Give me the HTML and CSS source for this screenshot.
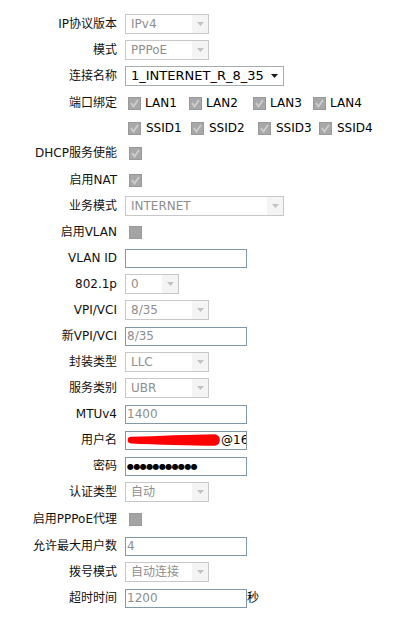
FILE: index.html
```html
<!DOCTYPE html>
<html lang="zh-CN">
<head>
<meta charset="utf-8">
<title>WAN</title>
<link rel="stylesheet" href="styles.css">
</head>
<body>
<div class="form">
  <div class="row"><div class="lbl">IP协议版本</div>
    <div class="sel dis w84"><span class="val">IPv4</span><span class="btn"><svg width="7" height="4" viewBox="0 0 7 4"><path d="M0 0H7L3.5 4Z"/></svg></span></div></div>
  <div class="row"><div class="lbl">模式</div>
    <div class="sel dis w84"><span class="val">PPPoE</span><span class="btn"><svg width="7" height="4" viewBox="0 0 7 4"><path d="M0 0H7L3.5 4Z"/></svg></span></div></div>
  <div class="row"><div class="lbl">连接名称</div>
    <div class="sel en w159"><span class="val">1_INTERNET_R_8_35</span><span class="btn"><svg width="7" height="4" viewBox="0 0 7 4"><path d="M0 0H7L3.5 4Z"/></svg></span></div></div>
  <div class="row h28"><div class="lbl">端口绑定</div>
    <div class="cbs lan">
      <span class="item"><svg class="cb" viewBox="0 0 13 13"><rect x="0.5" y="0.5" width="12" height="12"/><path d="M3 6 L5.5 9.5 L10 3"/></svg>LAN1</span>
      <span class="item"><svg class="cb" viewBox="0 0 13 13"><rect x="0.5" y="0.5" width="12" height="12"/><path d="M3 6 L5.5 9.5 L10 3"/></svg>LAN2</span>
      <span class="item"><svg class="cb" viewBox="0 0 13 13"><rect x="0.5" y="0.5" width="12" height="12"/><path d="M3 6 L5.5 9.5 L10 3"/></svg>LAN3</span>
      <span class="item"><svg class="cb" viewBox="0 0 13 13"><rect x="0.5" y="0.5" width="12" height="12"/><path d="M3 6 L5.5 9.5 L10 3"/></svg>LAN4</span>
    </div></div>
  <div class="row h22"><div class="lbl"></div>
    <div class="cbs ssid">
      <span class="item"><svg class="cb" viewBox="0 0 13 13"><rect x="0.5" y="0.5" width="12" height="12"/><path d="M3 6 L5.5 9.5 L10 3"/></svg>SSID1</span>
      <span class="item"><svg class="cb" viewBox="0 0 13 13"><rect x="0.5" y="0.5" width="12" height="12"/><path d="M3 6 L5.5 9.5 L10 3"/></svg>SSID2</span>
      <span class="item"><svg class="cb" viewBox="0 0 13 13"><rect x="0.5" y="0.5" width="12" height="12"/><path d="M3 6 L5.5 9.5 L10 3"/></svg>SSID3</span>
      <span class="item"><svg class="cb" viewBox="0 0 13 13"><rect x="0.5" y="0.5" width="12" height="12"/><path d="M3 6 L5.5 9.5 L10 3"/></svg>SSID4</span>
    </div></div>
  <div class="row h28"><div class="lbl">DHCP服务使能</div>
    <div class="one"><svg class="cb" viewBox="0 0 13 13"><rect x="0.5" y="0.5" width="12" height="12"/><path d="M3 6 L5.5 9.5 L10 3"/></svg></div></div>
  <div class="row"><div class="lbl">启用NAT</div>
    <div class="one"><svg class="cb" viewBox="0 0 13 13"><rect x="0.5" y="0.5" width="12" height="12"/><path d="M3 6 L5.5 9.5 L10 3"/></svg></div></div>
  <div class="row"><div class="lbl">业务模式</div>
    <div class="sel dis w159"><span class="val">INTERNET</span><span class="btn"><svg width="7" height="4" viewBox="0 0 7 4"><path d="M0 0H7L3.5 4Z"/></svg></span></div></div>
  <div class="row"><div class="lbl">启用VLAN</div>
    <div class="one"><svg class="cb off" viewBox="0 0 13 13"><rect x="0.5" y="0.5" width="12" height="12"/></svg></div></div>
  <div class="row"><div class="lbl">VLAN ID</div>
    <div class="inp"></div></div>
  <div class="row"><div class="lbl">802.1p</div>
    <div class="sel dis w54"><span class="val">0</span><span class="btn"><svg width="7" height="4" viewBox="0 0 7 4"><path d="M0 0H7L3.5 4Z"/></svg></span></div></div>
  <div class="row"><div class="lbl">VPI/VCI</div>
    <div class="sel dis w84"><span class="val">8/35</span><span class="btn"><svg width="7" height="4" viewBox="0 0 7 4"><path d="M0 0H7L3.5 4Z"/></svg></span></div></div>
  <div class="row"><div class="lbl">新VPI/VCI</div>
    <div class="inp">8/35</div></div>
  <div class="row"><div class="lbl">封装类型</div>
    <div class="sel dis w84"><span class="val">LLC</span><span class="btn"><svg width="7" height="4" viewBox="0 0 7 4"><path d="M0 0H7L3.5 4Z"/></svg></span></div></div>
  <div class="row"><div class="lbl">服务类别</div>
    <div class="sel dis w84"><span class="val">UBR</span><span class="btn"><svg width="7" height="4" viewBox="0 0 7 4"><path d="M0 0H7L3.5 4Z"/></svg></span></div></div>
  <div class="row"><div class="lbl">MTUv4</div>
    <div class="inp">1400</div></div>
  <div class="row"><div class="lbl">用户名</div>
    <div class="inp user"><svg class="redact" width="94" height="12" viewBox="0 0 94 12"><path d="M4 2.8 C30 2 64 0.4 88 0.2 A5.9 5.9 0 0 1 88 11.8 C64 11.6 30 10.4 4 9.4 A3.3 3.3 0 0 1 4 2.8Z"/></svg><span class="at">@16</span></div></div>
  <div class="row"><div class="lbl">密码</div>
    <div class="inp pass">●●●●●●●●●●●</div></div>
  <div class="row"><div class="lbl">认证类型</div>
    <div class="sel dis w84"><span class="val">自动</span><span class="btn"><svg width="7" height="4" viewBox="0 0 7 4"><path d="M0 0H7L3.5 4Z"/></svg></span></div></div>
  <div class="row h28"><div class="lbl">启用PPPoE代理</div>
    <div class="one"><svg class="cb off" viewBox="0 0 13 13"><rect x="0.5" y="0.5" width="12" height="12"/></svg></div></div>
  <div class="row"><div class="lbl">允许最大用户数</div>
    <div class="inp">4</div></div>
  <div class="row"><div class="lbl">拨号模式</div>
    <div class="sel dis w84"><span class="val">自动连接</span><span class="btn"><svg width="7" height="4" viewBox="0 0 7 4"><path d="M0 0H7L3.5 4Z"/></svg></span></div></div>
  <div class="row"><div class="lbl">超时时间</div>
    <div class="ctl"><div class="inp">1200</div><span class="unit">秒</span></div></div>
</div>
</body>
</html>
```
FILE: styles.css
```css
html, body {
  margin: 0;
  padding: 0;
  background: #ffffff;
}
body {
  font-family: "DejaVu Sans", "Noto Sans CJK SC", sans-serif;
  font-size: 12px;
  color: #000000;
}
.form {
  padding-top: 11px;
}
.row {
  display: grid;
  grid-template-columns: 117px 1fr;
  column-gap: 8px;
  align-items: center;
  height: 26px;
}
.row.h28 { height: 28px; }
.row.h22 { height: 22px; }
.lbl {
  text-align: right;
  white-space: nowrap;
  line-height: 14px;
  color: #111111;
}
/* select-like boxes */
.sel {
  display: flex;
  box-sizing: border-box;
  height: 20px;
  background: #ffffff;
}
.sel.w84 { width: 84px; }
.sel.w54 { width: 54px; }
.sel.w159 { width: 159px; }
.sel .val {
  flex: 1;
  padding-left: 5px;
  line-height: 18px;
  white-space: nowrap;
  overflow: hidden;
}
.sel .btn {
  width: 16px;
  display: flex;
  align-items: center;
  justify-content: center;
}
.sel.dis {
  border: 1px solid #c8c8c8;
}
.sel.dis .val { color: #8e8e8e; }
.sel.dis .btn { background: #f4f4f4; }
.sel.dis .btn svg { fill: #c2c2c2; }
.sel.en {
  border: 1px solid #a5acb2;
}
.sel.en .val {
  color: #000000;
  font-size: 13px;
}
.sel.en .btn svg { fill: #1a1a1a; }
.sel.en .btn { width: 18px; }
/* checkboxes */
.cb {
  width: 13px;
  height: 13px;
  display: block;
  flex: none;
}
.cb rect {
  fill: #a8a8a8;
  stroke: #999999;
  stroke-width: 1;
}
.cb path {
  fill: none;
  stroke: #cfcfcf;
  stroke-width: 1.7;
}
.cb.off rect { fill: #a4a4a4; stroke: #9a9a9a; }
.one {
  padding-left: 4px;
}
.cbs {
  display: grid;
  padding-left: 3px;
}
.cbs.lan { grid-template-columns: 61px 64px 60px auto; }
.cbs.ssid { grid-template-columns: 63px 67px 61px auto; }
.item {
  display: flex;
  align-items: center;
  gap: 4px;
  white-space: nowrap;
  line-height: 14px;
}
.cbs.ssid .item { gap: 5px; }
/* text inputs */
.inp {
  box-sizing: border-box;
  width: 122px;
  height: 19px;
  border: 1px solid #8198ab;
  padding-left: 1px;
  line-height: 17px;
  color: #8e8e8e;
  white-space: nowrap;
  overflow: hidden;
  background: #ffffff;
}
.inp.user {
  display: flex;
  align-items: center;
  color: #000000;
}
.redact {
  flex: none;
  fill: #ff0000;
}
.at { flex: none; }
.inp.pass {
  color: #000000;
  font-size: 8px;
  letter-spacing: -0.6px;
  padding-left: 1px;
}
.ctl {
  display: flex;
  align-items: center;
}
.unit {
  line-height: 14px;
}
```
